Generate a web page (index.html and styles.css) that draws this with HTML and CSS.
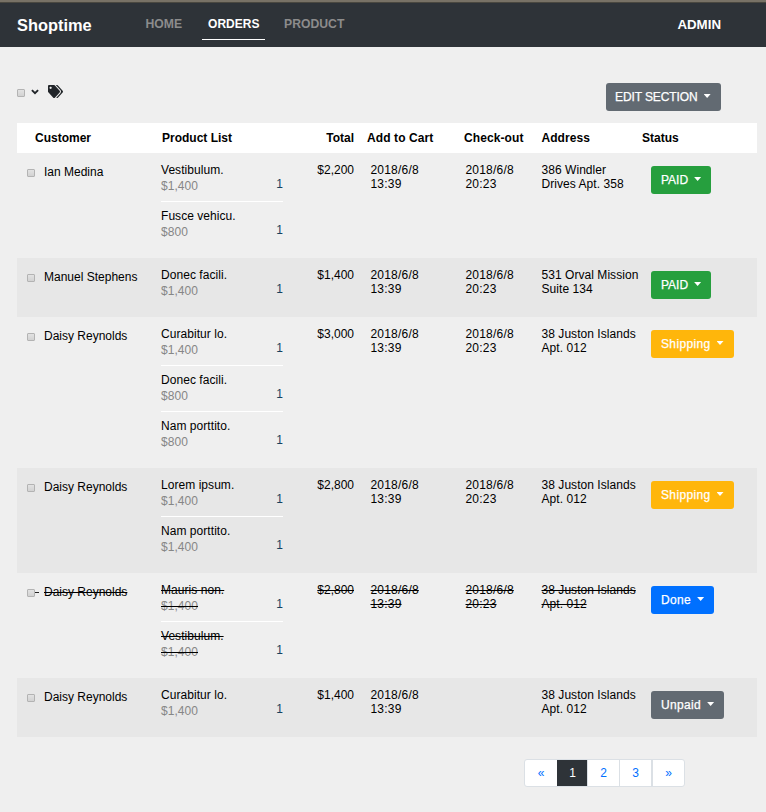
FILE: index.html
```html
<!DOCTYPE html>
<html lang="en">
<head>
<meta charset="utf-8">
<title>Shoptime</title>
<link rel="stylesheet" href="styles.css">
</head>
<body>
<header class="navbar">
  <a class="brand">Shoptime</a>
  <nav class="nav">
    <a class="nav-link">HOME</a>
    <a class="nav-link active">ORDERS</a>
    <a class="nav-link">PRODUCT</a>
  </nav>
  <a class="admin">ADMIN</a>
</header>
<main class="page">
  <div class="toolbar">
    <span class="check"></span>
    <svg class="chevron" width="8" height="6" viewBox="0 0 8 6"><path d="M.9 1.1 4 4.1 7.1 1.1" fill="none" stroke="#212529" stroke-width="1.9"/></svg>
    <svg class="tags" width="15" height="13" viewBox="0 0 640 512" preserveAspectRatio="none"><path fill="#212529" d="M497.941 225.941L286.059 14.059A48 48 0 0 0 252.118 0H48C21.490 0 0 21.490 0 48v204.118a48 48 0 0 0 14.059 33.941l211.882 211.882c18.744 18.745 49.136 18.746 67.882 0l204.118-204.118c18.745-18.745 18.745-49.137 0-67.882zM112 160c-26.510 0-48-21.490-48-48s21.490-48 48-48 48 21.490 48 48-21.490 48-48 48zm513.941 133.823L421.823 497.941c-18.745 18.745-49.137 18.745-67.882 0l-.360-.360L527.640 323.522c16.999-16.999 26.360-39.600 26.360-63.640s-9.362-46.641-26.360-63.640L331.397 0h48.721a48 48 0 0 1 33.941 14.059l211.882 211.882c18.745 18.745 18.745 49.137 0 67.882z"/></svg>
    <button class="btn gray edit">EDIT SECTION</button>
  </div>
  <section class="orders">
    <div class="row head">
      <span class="h-customer">Customer</span><span class="h-products">Product List</span><span class="total">Total</span><span class="h-cart">Add to Cart</span><span class="h-checkout">Check-out</span><span class="address">Address</span><span class="h-status">Status</span>
    </div>
    <div class="row">
      <div class="customer"><span class="check"></span><i></i>Ian Medina</div>
      <div class="products">
        <div class="product"><div>Vestibulum.<small>$1,400</small></div><b>1</b></div>
        <div class="product"><div>Fusce vehicu.<small>$800</small></div><b>1</b></div>
      </div>
      <div class="total">$2,200</div>
      <div class="date">2018/6/8<br>13:39</div>
      <div class="date">2018/6/8<br>20:23</div>
      <div class="address">386 Windler<br>Drives Apt. 358</div>
      <div class="status"><button class="btn caps green">PAID</button></div>
    </div>
    <div class="row">
      <div class="customer"><span class="check"></span><i></i>Manuel Stephens</div>
      <div class="products">
        <div class="product"><div>Donec facili.<small>$1,400</small></div><b>1</b></div>
      </div>
      <div class="total">$1,400</div>
      <div class="date">2018/6/8<br>13:39</div>
      <div class="date">2018/6/8<br>20:23</div>
      <div class="address">531 Orval Mission<br>Suite 134</div>
      <div class="status"><button class="btn caps green">PAID</button></div>
    </div>
    <div class="row">
      <div class="customer"><span class="check"></span><i></i>Daisy Reynolds</div>
      <div class="products">
        <div class="product"><div>Curabitur lo.<small>$1,400</small></div><b>1</b></div>
        <div class="product"><div>Donec facili.<small>$800</small></div><b>1</b></div>
        <div class="product"><div>Nam porttito.<small>$800</small></div><b>1</b></div>
      </div>
      <div class="total">$3,000</div>
      <div class="date">2018/6/8<br>13:39</div>
      <div class="date">2018/6/8<br>20:23</div>
      <div class="address">38 Juston Islands<br>Apt. 012</div>
      <div class="status"><button class="btn yellow">Shipping</button></div>
    </div>
    <div class="row">
      <div class="customer"><span class="check"></span><i></i>Daisy Reynolds</div>
      <div class="products">
        <div class="product"><div>Lorem ipsum.<small>$1,400</small></div><b>1</b></div>
        <div class="product"><div>Nam porttito.<small>$1,400</small></div><b>1</b></div>
      </div>
      <div class="total">$2,800</div>
      <div class="date">2018/6/8<br>13:39</div>
      <div class="date">2018/6/8<br>20:23</div>
      <div class="address">38 Juston Islands<br>Apt. 012</div>
      <div class="status"><button class="btn yellow">Shipping</button></div>
    </div>
    <div class="row done">
      <div class="customer"><span class="check"></span><i></i>Daisy Reynolds</div>
      <div class="products">
        <div class="product"><div>Mauris non.<small>$1,400</small></div><b>1</b></div>
        <div class="product"><div>Vestibulum.<small>$1,400</small></div><b>1</b></div>
      </div>
      <div class="total">$2,800</div>
      <div class="date">2018/6/8<br>13:39</div>
      <div class="date">2018/6/8<br>20:23</div>
      <div class="address">38 Juston Islands<br>Apt. 012</div>
      <div class="status"><button class="btn blue">Done</button></div>
    </div>
    <div class="row">
      <div class="customer"><span class="check"></span><i></i>Daisy Reynolds</div>
      <div class="products">
        <div class="product"><div>Curabitur lo.<small>$1,400</small></div><b>1</b></div>
      </div>
      <div class="total">$1,400</div>
      <div class="date">2018/6/8<br>13:39</div>
      <div class="date"></div>
      <div class="address">38 Juston Islands<br>Apt. 012</div>
      <div class="status"><button class="btn gray">Unpaid</button></div>
    </div>
  </section>
  <nav class="pagination">
    <a class="first">«</a><a class="current">1</a><a>2</a><a>3</a><a class="last">»</a>
  </nav>
</main>
</body>
</html>
```
FILE: styles.css
```css
* { box-sizing: border-box; }

body {
  margin: 0;
  min-height: 812px;
  background: #efefef;
  color: #000;
  font: 12px/14px "Liberation Sans", Arial, sans-serif;
}

.navbar {
  display: flex;
  align-items: flex-start;
  height: 47px;
  padding: 0 45px 0 17px;
  border-top: 2px solid #787266;
  background: #2e3338;
  box-shadow: inset 0 1px #4a4840;
  color: #fff;
  font-weight: bold;
}

.brand { width: 121.5px; padding-top: 13px; font-size: 16.4px; line-height: 20px; }
.nav { display: flex; gap: 12px; padding-top: 7px; }
.nav-link { height: 31px; padding: 8px 7px 0; color: #8c8c8c; font-size: 12.2px; line-height: 14px; }
.nav-link.active { width: 63px; margin-left: 1px; padding: 8px 6px 0; border-bottom: 1px solid #fff; color: #fff; font-size: 12px; }
.admin { margin-left: auto; padding-top: 15px; font-size: 13.3px; line-height: 16px; }

.page { padding: 36px 9px 0 17px; }

.toolbar { display: flex; align-items: flex-start; height: 40px; padding-right: 36px; }
.toolbar .check { margin: 6px 6px 0 0; }
.chevron { margin: 6px 9px 0 0; }
.tags { margin-top: 2px; }

.check {
  flex: none;
  width: 8px;
  height: 8px;
  border: 1px solid #b3b3b3;
  border-radius: 1px;
  background: linear-gradient(#e2e2e2, #d2d2d2);
}

.btn {
  display: flex;
  align-items: center;
  gap: 6px;
  height: 28px;
  padding: 0 10px;
  border: 0;
  border-radius: 3px;
  color: #fff;
  font: 12px/14px "Liberation Sans", Arial, sans-serif;
  letter-spacing: .35px;
  -webkit-text-stroke: .25px #fff;
}
.btn::after {
  content: "";
  width: 7px;
  height: 4px;
  margin-bottom: 2px;
  background: #fff;
  clip-path: polygon(0 0, 100% 0, 50% 100%);
}
.caps { letter-spacing: 0; }
.btn.edit { width: 115px; margin-left: auto; padding: 0 9px; letter-spacing: -.1px; white-space: nowrap; }
.gray { background: #626a72; }
.green { background: #269f3e; }
.yellow { background: #ffb60b; }
.blue { background: #0070ff; }

.row { display: grid; grid-template-columns: 144px 122px 87px 95px 76px 110px 1fr; padding: 10px 0 11px; }
.row:nth-child(odd) { background: #e7e7e7; }
.row.head { height: 30px; padding: 8px 0; background: #fff; font-weight: bold; white-space: nowrap; }

.h-customer { padding-left: 18px; }
.h-products { padding-left: 1px; }
.h-cart { margin-left: -3px; letter-spacing: .1px; }
.h-checkout { margin-left: -1px; letter-spacing: .1px; }
.h-status { margin-left: -9px; }

.customer { display: flex; padding: 2px 0 0 10px; line-height: 14px; }
.customer .check { margin-top: 4px; }
.customer i { width: 9px; }
.done .customer i { width: 4px; height: 1px; margin: 7px 5px 0 0; background: #222; }
.product { display: flex; justify-content: space-between; height: 38px; }
.product + .product { border-top: 1px solid #fff; height: 46px; padding-top: 7px; }
.product div { line-height: 14px; letter-spacing: .05px; }
.product small { display: block; margin-top: 2px; color: #868686; font-size: 12px; line-height: 14px; }
.product b { padding-top: 14px; color: #17425f; font-weight: normal; }
.total { padding-right: 16px; text-align: right; }
.date { padding-left: .5px; letter-spacing: .2px; }
.status { padding-top: 3px; }
.address { padding-left: .5px; white-space: nowrap; letter-spacing: .05px; }

.done .customer, .done .product div, .done .total, .done .date, .done .address { text-decoration: line-through; }

.pagination {
  display: flex;
  width: 161px;
  height: 28px;
  margin: 22px 0 0 507px;
  overflow: hidden;
  border: 1px solid #dbe0e5;
  border-radius: 3px;
  background: #fff;
}
.pagination a { width: 32px; border-left: 1px solid #dbe0e5; color: #0070ff; line-height: 27px; text-align: center; }
.pagination .first { border-left: 0; }
.pagination .current { width: 30px; border-color: #2e3338; background: #2e3338; color: #fff; }
.pagination .last { width: 33px; border-left-width: 2px; }
```
